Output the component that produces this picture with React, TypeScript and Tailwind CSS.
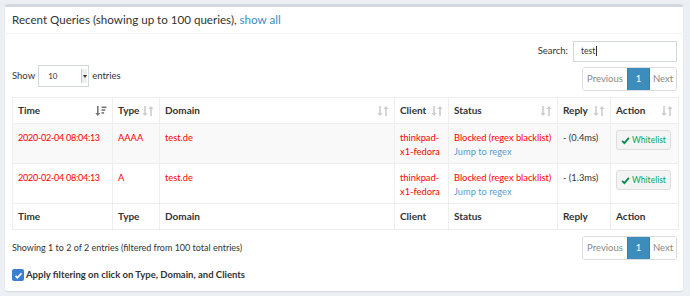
import React from "react";

const font = { fontFamily: "Lato, 'Liberation Sans', sans-serif" };

function SortIcon({ active = false }: { active?: boolean }) {
  if (active) {
    return (
      <svg className="w-[12px] h-[12px] text-[#777]" viewBox="0 0 12 12" fill="currentColor">
        <path d="M2 1h1.6v7H5.4L2.8 11 0.2 8H2z" />
        <rect x="6.5" y="1.5" width="5" height="1.6" />
        <rect x="6.5" y="4.3" width="3.8" height="1.6" />
        <rect x="6.5" y="7.1" width="2.6" height="1.6" />
      </svg>
    );
  }
  return (
    <svg className="w-[12px] h-[12px] text-[#cccccc]" viewBox="0 0 12 12" fill="currentColor">
      <path d="M2.2 1h1.6v7h1.8L3 11 0.4 8h1.8z" />
      <path d="M8.2 11h1.6V4h1.8L9 1 6.4 4h1.8z" />
    </svg>
  );
}

function Pager() {
  return (
    <div className="flex text-[9.5px] rounded-[3px] border border-[#ddd] overflow-hidden h-[24px] w-[95px]">
      <div className="w-[44px] flex items-center justify-center text-[#888] bg-white">Previous</div>
      <div className="w-[23px] flex items-center justify-center text-white bg-[#3c8dbc] border-x border-[#367fa9]">1</div>
      <div className="flex-1 flex items-center justify-center text-[#888] bg-white">Next</div>
    </div>
  );
}

function WhitelistButton() {
  return (
    <button className="flex items-center justify-center gap-[2px] w-[55px] h-[20px] bg-[#f4f4f4] border border-[#ddd] rounded-[3px] text-[8.5px] text-[#00a65a]">
      <svg className="w-[9px] h-[9px]" viewBox="0 0 12 12" fill="none" stroke="#008d4c" strokeWidth={2.4}>
        <path d="M1.5 6.5l3 3 6-7" />
      </svg>
      Whitelist
    </button>
  );
}

const rows = [
  { time: "2020-02-04 08:04:13", type: "AAAA", reply: "- (0.4ms)", bg: "bg-[#f9f9f9]" },
  { time: "2020-02-04 08:04:13", type: "A", reply: "- (1.3ms)", bg: "bg-white" },
];

const cols = [
  { name: "Time", w: "w-[100px]", icon: "active" },
  { name: "Type", w: "w-[47px]", icon: "sort" },
  { name: "Domain", w: "w-[235px]", icon: "sort" },
  { name: "Client", w: "w-[54px]", icon: "sort" },
  { name: "Status", w: "w-[109px]", icon: "sort" },
  { name: "Reply", w: "w-[53px]", icon: "sort" },
  { name: "Action", w: "w-[68px]", icon: "sort" },
];

const cell = "border border-[#eeeeee] px-[5px] pt-[7px] align-top";

export default function App() {
  return (
    <div className="w-[690px] h-[296px] bg-[#ecf0f5] pt-[4px] pl-[5px] pr-[7px] text-[#333]" style={font}>
      <div className="bg-white border-t-[3px] border-[#d2d6de] rounded-[3px] shadow-[0_1px_1px_rgba(0,0,0,0.1)] h-[287px]">
        {/* Header */}
        <div className="h-[27px] px-[7px] flex items-center border-b border-[#f4f4f4]">
          <span className="text-[11.6px]">
            Recent Queries (showing up to 100 queries), <span className="text-[#3c8dbc]">show all</span>
          </span>
        </div>

        <div className="pl-[7px] pr-[6px] pt-[6px]">
          <div className="flex justify-end items-center gap-[5px] text-[9.5px] h-[22px]">
            <span>Search:</span>
            <div className="w-[104px] h-[21px] border border-[#d2d6de] flex items-center px-[7px] text-[8.5px]">
              test<span className="w-px h-[10px] bg-[#333] ml-px" />
            </div>
          </div>

          <div className="flex justify-between items-start mt-[3px] h-[27px]">
            <div className="flex items-center gap-[3px] text-[9.5px]">
              <span>Show</span>
              <div className="w-[51px] h-[22px] border border-[#d2d6de] flex items-center justify-between pl-[9px] pr-[1px] text-[8px]">
                <span>10</span>
                <span className="w-[6px] h-[14px] bg-[#eee] border-l border-[#ccc] flex items-center justify-center">
                  <span className="border-x-[2.5px] border-x-transparent border-t-[3px] border-t-[#333]" />
                </span>
              </div>
              <span>entries</span>
            </div>
            <div className="mt-[2px]">
              <Pager />
            </div>
          </div>

          <table className="mt-[5px] w-full border-collapse border border-[#eeeeee] text-[9.3px] table-fixed">
            <thead>
              <tr className="h-[26px]">
                {cols.map((c) => (
                  <th key={c.name} className={`${c.w} border border-[#eeeeee] text-left font-bold text-[10px] px-[5px]`}>
                    <div className="flex items-center justify-between">
                      <span>{c.name}</span>
                      <SortIcon active={c.icon === "active"} />
                    </div>
                  </th>
                ))}
              </tr>
            </thead>
            <tbody className="text-[#ff0000] leading-[14px]">
              {rows.map((r, i) => (
                <tr key={i} className={`${r.bg} h-[40px]`}>
                  <td className={`${cell} text-[9px] tracking-[-0.25px]`}>{r.time}</td>
                  <td className={cell}>{r.type}</td>
                  <td className={cell}>test.de</td>
                  <td className={cell}>
                    thinkpad-
                    <br />
                    x1-fedora
                  </td>
                  <td className={cell}>
                    <div>Blocked (regex blacklist)</div>
                    <div className="text-[#5b9bd1]">Jump to regex</div>
                  </td>
                  <td className={`${cell} text-[#333]`}>{r.reply}</td>
                  <td className="border border-[#eeeeee] px-[5px] pt-[6px] align-top">
                    <WhitelistButton />
                  </td>
                </tr>
              ))}
            </tbody>
            <tfoot>
              <tr className="h-[26px]">
                {cols.map((c) => (
                  <th key={c.name} className="border border-[#eeeeee] text-left font-bold text-[10px] px-[5px]">
                    {c.name}
                  </th>
                ))}
              </tr>
            </tfoot>
          </table>

          <div className="flex justify-between items-center mt-[6px] h-[24px]">
            <span className="text-[9px]">Showing 1 to 2 of 2 entries (filtered from 100 total entries)</span>
            <Pager />
          </div>

          <div className="flex items-center gap-[2px] mt-[8px] text-[9.5px] font-bold">
            <span className="w-[12px] h-[12px] rounded-[2px] bg-[#3c7fd1] flex items-center justify-center">
              <svg className="w-[9px] h-[9px]" viewBox="0 0 12 12" fill="none" stroke="white" strokeWidth={2.2}>
                <path d="M2 6.5l2.5 2.5 5.5-6" />
              </svg>
            </span>
            <span>Apply filtering on click on Type, Domain, and Clients</span>
          </div>
        </div>
      </div>
    </div>
  );
}
